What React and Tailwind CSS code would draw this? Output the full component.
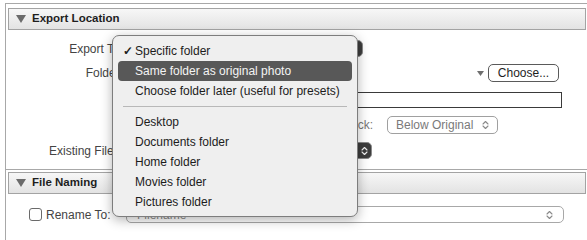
import React from "react";

const menuItems = [
    { label: "Specific folder", checked: true },
    { label: "Same folder as original photo", active: true },
    { label: "Choose folder later (useful for presets)" },
    { separator: true },
    { label: "Desktop" },
    { label: "Documents folder" },
    { label: "Home folder" },
    { label: "Movies folder" },
    { label: "Pictures folder" },
];

// little up/down chevron used by the popup buttons
function UpDown({ color = "#777" }) {
    return (
        <svg width="7" height="10" viewBox="0 0 7 10">
            <path
                d="M1 4L3.5 1.5L6 4M1 6L3.5 8.5L6 6"
                fill="none"
                stroke={color}
                strokeWidth="1.1"
                strokeLinecap="round"
                strokeLinejoin="round"
            />
        </svg>
    );
}

function SectionHeader({ title }) {
    return (
        <div className="ml-[2px] w-[578px] h-[22px] flex items-center border border-[#a3a3a3] bg-linear-to-b from-[#f7f7f7] to-[#e3e3e3]">
            <svg width="10" height="8" viewBox="0 0 10 8" className="ml-[7px]">
                <path d="M0 0H10L5 8Z" fill="#6b6b6b" />
            </svg>
            <span className="ml-[6px] text-[11.5px] font-bold text-[#1e1e1e]">{title}</span>
        </div>
    );
}

export default function App() {
    return (
        <div className="relative w-[587px] h-[240px] overflow-hidden bg-white text-[12px] text-[#444] font-['Liberation_Sans',Arial,sans-serif]">
            {/* outer frame */}
            <div className="ml-[5px] mt-[3px] h-[260px] border-l border-t border-[#a8a8a8]">
                <div className="mt-[4px]">
                    <SectionHeader title="Export Location" />
                </div>

                {/* Export To */}
                <div className="mt-[10px] ml-[2px] h-[17px] flex items-center">
                    <span className="w-[115px] text-right">Export To:</span>
                    <div className="ml-[7px] w-[233px] h-[17px] rounded-[5px] bg-[#3d3d3d] border border-[#8a8a8a]" />
                </div>

                {/* Folder */}
                <div className="mt-[7px] ml-[2px] w-[554px] h-[18px] flex items-center">
                    <span className="w-[115px] text-right">Folder:</span>
                    <svg width="7" height="5" viewBox="0 0 7 5" className="ml-auto">
                        <path d="M0 0H7L3.5 5Z" fill="#6f6f6f" />
                    </svg>
                    <button className="ml-[4px] mr-[3px] w-[71px] h-[18px] rounded-[5px] border border-[#5a5a5a] bg-white text-[12px] text-[#1e1e1e] leading-none">
                        Choose...
                    </button>
                </div>

                {/* Put in Subfolder */}
                <div className="mt-[10px] ml-[2px] w-[554px] h-[16px] flex items-center">
                    <div className="ml-[150px] flex-1 h-[16px] border border-[#3a3a3a] bg-white" />
                </div>

                {/* Add to Stack */}
                <div className="mt-[8px] ml-[2px] h-[18px] flex items-center">
                    <span className="ml-[240px] w-[125px] text-right text-[#777]">Add to Stack:</span>
                    <div className="ml-[14px] w-[111px] h-[18px] flex items-center rounded-[5px] border border-[#a0a0a0] px-[8px]">
                        <span className="text-[#7a7a7a]">Below Original</span>
                        <span className="ml-auto">
                            <UpDown color="#8a8a8a" />
                        </span>
                    </div>
                </div>

                {/* Existing Files */}
                <div className="mt-[8px] ml-[2px] h-[17px] flex items-center">
                    <span className="w-[115px] text-right">Existing Files:</span>
                    <div className="ml-[7px] w-[242px] h-[17px] flex items-center rounded-[5px] bg-[#3d3d3d] border border-[#8a8a8a]">
                        <span className="ml-auto mr-[3px]">
                            <UpDown color="#f2f2f2" />
                        </span>
                    </div>
                </div>

                {/* File Naming */}
                <div className="mt-[10px] border-t border-[#a8a8a8]">
                    <div className="mt-[2px]">
                        <SectionHeader title="File Naming" />
                    </div>
                    <div className="mt-[12px] h-[17px] flex items-center">
                        <div className="ml-[23px] w-[13px] h-[13px] rounded-[3px] border border-[#6a6a6a] bg-white" />
                        <span className="ml-[4px] w-[80px]">Rename To:</span>
                        <div className="w-[438px] h-[17px] flex items-center rounded-[5px] border border-[#a8a8a8] px-[10px]">
                            <span className="text-[#8a8a8a]">Filename</span>
                            <span className="ml-auto">
                                <UpDown color="#8a8a8a" />
                            </span>
                        </div>
                    </div>
                </div>
            </div>

            {/* open popup menu */}
            <div className="absolute left-[112px] top-[35px] w-[246px] rounded-[7px] border border-[#7d7d7d] bg-[#efefef] px-[5px] pt-[5px] pb-[4px] shadow-[0_3px_12px_rgba(0,0,0,0.3)]">
                {menuItems.map((item, i) =>
                    item.separator ? (
                        <div key={i} className="h-[11px] flex items-center px-[5px]">
                            <div className="w-full border-t border-[#b8b8b8]" />
                        </div>
                    ) : (
                        <div
                            key={i}
                            className={
                                item.active
                                    ? "h-[20px] flex items-center rounded-[4px] bg-[#585858] text-[#f4f4f4]"
                                    : "h-[20px] flex items-center text-[#1c1c1c]"
                            }
                        >
                            <span className="w-[17px] pl-[5px] text-[12px] font-bold">{item.checked ? "✓" : ""}</span>
                            <span>{item.label}</span>
                        </div>
                    )
                )}
            </div>
        </div>
    );
}
